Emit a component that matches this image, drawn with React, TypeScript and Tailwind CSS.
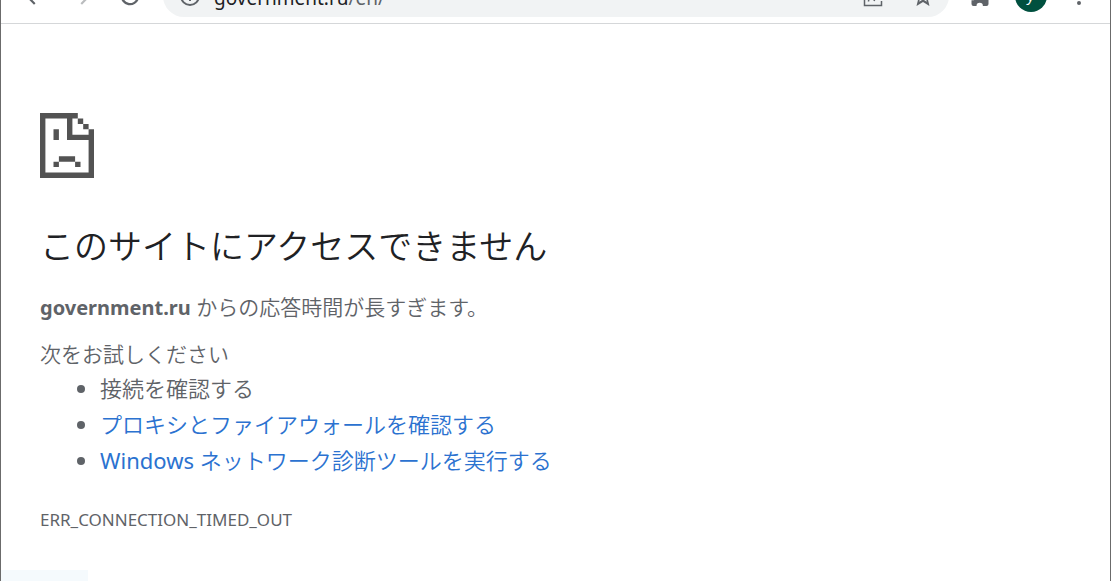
import type { ReactNode } from "react";

const SUGGESTIONS: { product?: string; text: string; href?: string }[] = [
  { text: "接続を確認する" },
  { text: "プロキシとファイアウォールを確認する", href: "#proxy" },
  { product: "Windows", text: " ネットワーク診断ツールを実行する", href: "#diagnose" },
];

function ToolButton({
  label,
  className = "w-12",
  children,
}: {
  label: string;
  className?: string;
  children: ReactNode;
}) {
  return (
    <button
      type="button"
      aria-label={label}
      className={`flex h-full shrink-0 items-center justify-center ${className}`}
    >
      {children}
    </button>
  );
}

function Icon({ d, className = "size-6 fill-[#5f6368]" }: { d: string; className?: string }) {
  return (
    <svg viewBox="0 0 24 24" className={className} aria-hidden>
      <path d={d} />
    </svg>
  );
}

function Toolbar() {
  return (
    <header className="flex h-6 flex-col justify-end overflow-hidden border-b border-[#d5d7d9] bg-white pb-1.5">
      <div className="flex h-[42px] shrink-0 items-center px-[9px]">
        <ToolButton label="戻る">
          <Icon
            className="size-[26px] fill-[#5f6368]"
            d="M20 11H7.83l5.59-5.59L12 4l-8 8 8 8 1.41-1.41L7.83 13H20v-2z"
          />
        </ToolButton>
        <ToolButton label="進む">
          <Icon
            className="size-[26px] fill-[#babcbe]"
            d="M12 4l-1.41 1.41L16.17 11H4v2h12.17l-5.58 5.59L12 20l8-8z"
          />
        </ToolButton>
        <ToolButton label="再読み込み">
          <Icon
            className="size-7 fill-[#5f6368]"
            d="M17.65 6.35A7.96 7.96 0 0 0 12 4a8 8 0 1 0 7.73 10h-2.08A6 6 0 1 1 12 6c1.66 0 3.14.69 4.22 1.78L13 11h7V4z"
          />
        </ToolButton>

        <div className="ml-[9px] flex h-full min-w-0 flex-1 items-center rounded-full bg-[#f1f3f4] pr-px pl-[15px]">
          <Icon d="M11 7h2v2h-2zm0 4h2v6h-2zm1-9a10 10 0 1 0 0 20 10 10 0 0 0 0-20zm0 18a8 8 0 1 1 0-16 8 8 0 0 1 0 16z" />
          <a
            href="#address"
            className="ml-3 min-w-0 flex-1 truncate pt-1 text-[19px] leading-7 text-[#202124]"
          >
            government.ru<span className="text-[#5f6368]">/en/</span>
          </a>
          <ToolButton label="共有" className="w-[50px]">
            <svg
              viewBox="0 0 24 24"
              className="size-6 fill-none stroke-[#5f6368] stroke-[1.5]"
              aria-hidden
            >
              <path d="M9 4H3.500v17.500h17V17M7.500 17.500c.5-5 3-8 7.500-8M14 4l5.500 5.500L14 15l-1 2" />
            </svg>
          </ToolButton>
          <ToolButton label="ブックマーク" className="w-[50px]">
            <Icon d="M22 9.24l-7.19-.62L12 2 9.19 8.63 2 9.24l5.46 4.73L5.5 22 12 18l6.500 4-1.950-8.030zM12 15.4l-3.76 2.27 1-4.28-3.32-2.88 4.38-.38L12 6.1l1.71 4.04 4.38.38-3.32 2.88 1 4.28z" />
          </ToolButton>
        </div>

        <ToolButton label="拡張機能" className="ml-2 w-12">
          <Icon d="M21 11h-1.500V7a2 2 0 0 0-2-2h-4V3.5a2.5 2.5 0 0 0-5 0V5h-4a2 2 0 0 0-2 2v3.8H4a2.700 2.700 0 0 1 0 5.400H2.500V20a2 2 0 0 0 2 2h3a3.200 3.200 0 0 1 6.400 0h3.600a2 2 0 0 0 2-2v-4H21a2.5 2.5 0 0 0 0-5z" />
        </ToolButton>
        <ToolButton label="プロフィール" className="w-[52px]">
          <span className="flex size-8 items-center justify-center rounded-full bg-[#00503f] text-sm text-white italic">
            y
          </span>
        </ToolButton>
        <ToolButton label="メニュー" className="w-11">
          <Icon d="M12 7a2 2 0 1 0 0-4 2 2 0 0 0 0 4zm0 3a2 2 0 1 0 0 4 2 2 0 0 0 0-4zm0 7a2 2 0 1 0 0 4 2 2 0 0 0 0-4z" />
        </ToolButton>
      </div>
    </header>
  );
}

function SadPage() {
  // one pixel of the drawing is 2 units wide
  return (
    <svg viewBox="0 0 20 24" className="h-[65px] w-[54px] fill-[#535353]" aria-hidden>
      <path d="M0 0h14v2h-2v6h6V6h2v18H0zM2 2v20h16V10h-8V2z" fillRule="evenodd" />
      <path d="M14 2h2v2h-2zM16 4h2v2h-2z" />
      <path d="M5 6h2v4H5zM7 16h6v2H7zM5 18h2v2H5zM13 18h2v2h-2z" />
    </svg>
  );
}

export default function App() {
  return (
    <div className="relative min-h-screen border-x border-[#6b6b6b] bg-white font-['Noto_Sans','Noto_Sans_CJK_JP',sans-serif]">
      <Toolbar />

      <main className="px-[39px] pt-[89px] font-[350] text-[#5f6368]">
        <SadPage />

        <h1 className="mt-10 text-[34px] leading-[56px] text-[#202124]">
          このサイトにアクセスできません
        </h1>

        <p className="mt-[15px] text-[21px] leading-9">
          <strong className="text-[20px] font-bold">government.ru</strong> からの応答時間が長すぎます。
        </p>

        <p className="mt-3 text-[21px] leading-8">次をお試しください</p>
        <ul className="list-disc pl-[60px] text-[22px] leading-9">
          {SUGGESTIONS.map(({ product, text, href }) => (
            <li key={text}>
              {href ? (
                <a href={href} className="text-[#2b72d0]">
                  {product && <span className="font-normal">{product}</span>}
                  {text}
                </a>
              ) : (
                text
              )}
            </li>
          ))}
        </ul>

        <p className="mt-6 text-[17px] leading-9 font-normal">ERR_CONNECTION_TIMED_OUT</p>
      </main>

      {/* link status bubble, almost faded out */}
      <div className="absolute bottom-0 left-0 h-[11px] w-[87px] bg-[#f5fafd]" />
    </div>
  );
}
